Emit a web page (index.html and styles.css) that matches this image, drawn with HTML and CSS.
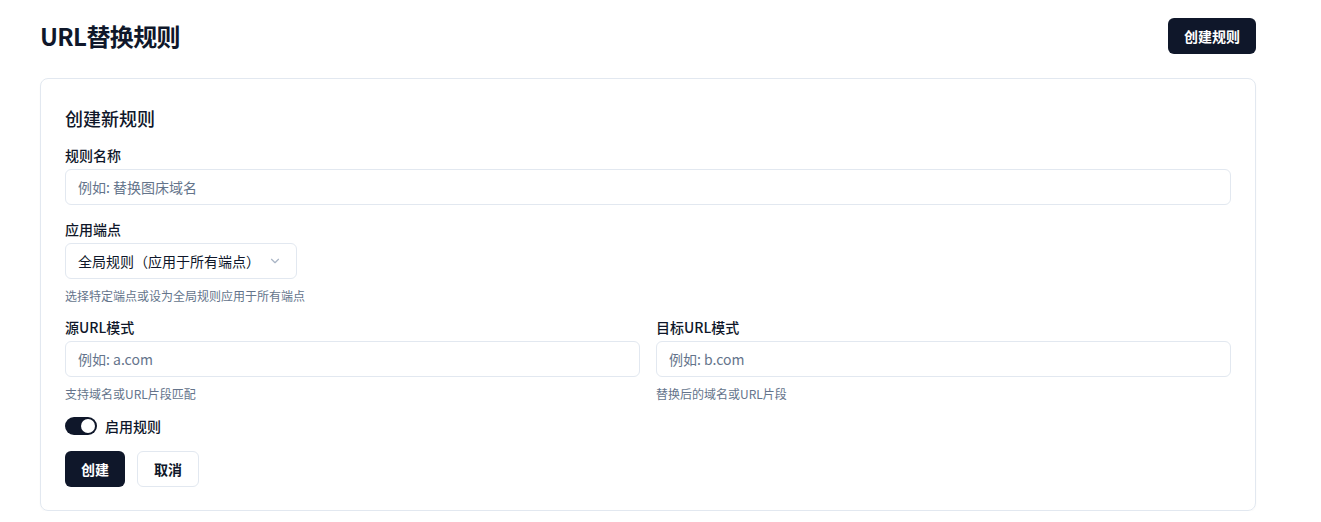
FILE: index.html
```
<!DOCTYPE html>
<html lang="zh-CN">

<head>
    <meta charset="utf-8">
    <title>URL替换规则</title>
    <link rel="stylesheet" href="styles.css">
</head>

<body>
    <div class="page">
        <div class="page-header">
            <h1>URL替换规则</h1>
            <button type="button" class="btn btn-primary">创建规则</button>
        </div>

        <div class="card">
            <h2 class="card-title">创建新规则</h2>

            <div class="field">
                <label for="rule-name">规则名称</label>
                <input type="text" id="rule-name" class="input" placeholder="例如: 替换图床域名">
            </div>

            <div class="field field-gap">
                <label>应用端点</label>
                <div class="select">
                    <span>全局规则（应用于所有端点）</span>
                    <svg class="chevron" width="16" height="16" viewBox="0 0 24 24" fill="none" stroke="currentColor" stroke-width="2" stroke-linecap="round" stroke-linejoin="round">
                        <path d="m6 9 6 6 6-6"></path>
                    </svg>
                </div>
                <p class="hint">选择特定端点或设为全局规则应用于所有端点</p>
            </div>

            <div class="row">
                <div class="field">
                    <label for="source">源URL模式</label>
                    <input type="text" id="source" class="input" placeholder="例如: a.com">
                    <p class="hint">支持域名或URL片段匹配</p>
                </div>
                <div class="field">
                    <label for="target">目标URL模式</label>
                    <input type="text" id="target" class="input" placeholder="例如: b.com">
                    <p class="hint">替换后的域名或URL片段</p>
                </div>
            </div>

            <div class="switch-row">
                <span class="switch"><span class="thumb"></span></span>
                <span class="switch-label">启用规则</span>
            </div>

            <div class="actions">
                <button type="button" class="btn btn-primary">创建</button>
                <button type="button" class="btn btn-outline">取消</button>
            </div>
        </div>
    </div>
</body>

</html>
```

FILE: styles.css
```
body {
    font-family: "Noto Sans CJK SC", "Noto Sans", sans-serif;
    background-color: #ffffff;
    color: #0f172a;
    margin: 0;
    padding: 0;
}

.page {
    width: 1216px;
    padding: 18px 0 0 40px;
}

.page-header {
    display: flex;
    justify-content: space-between;
    align-items: center;
    margin-bottom: 24px;
}

h1 {
    font-size: 24px;
    line-height: 36px;
    font-weight: 700;
    letter-spacing: -0.6px;
    margin: 0;
}

.btn {
    font-family: inherit;
    font-size: 14px;
    font-weight: 600;
    height: 36px;
    padding: 0 16px;
    border-radius: 6px;
    cursor: pointer;
}

.btn-primary {
    background-color: #0f172a;
    color: #ffffff;
    border: none;
}

.btn-outline {
    background-color: #ffffff;
    color: #0f172a;
    border: 1px solid #e2e8f0;
}

.card {
    border: 1px solid #e2e8f0;
    border-radius: 8px;
    padding: 24px 24px 23px;
    box-shadow: 0 1px 2px rgba(0, 0, 0, 0.03);
}

.card-title {
    font-size: 18px;
    line-height: 30px;
    font-weight: 500;
    margin: 0 0 12px;
}

.field {
    display: flex;
    flex-direction: column;
}

.field-gap {
    margin-top: 14px;
}

label {
    font-size: 14px;
    line-height: 20px;
    font-weight: 500;
    margin-bottom: 4px;
}

.input {
    font-family: inherit;
    font-size: 14px;
    height: 36px;
    box-sizing: border-box;
    padding: 0 12px;
    border: 1px solid #e2e8f0;
    border-radius: 6px;
    color: #0f172a;
    outline: none;
}

.input::placeholder {
    color: #64748b;
}

.select {
    width: 232px;
    height: 36px;
    box-sizing: border-box;
    display: flex;
    align-items: center;
    justify-content: space-between;
    padding: 0 14px 0 12px;
    border: 1px solid #e2e8f0;
    border-radius: 6px;
    font-size: 14px;
}

.chevron {
    color: #94a3b8;
    opacity: 0.8;
    width: 14px;
    height: 14px;
}

.hint {
    font-size: 12px;
    line-height: 16px;
    color: #64748b;
    margin: 9px 0 0;
}

.row {
    display: grid;
    grid-template-columns: 1fr 1fr;
    gap: 16px;
    margin-top: 13px;
}

.switch-row {
    display: flex;
    align-items: center;
    gap: 8px;
    height: 20px;
    margin-top: 14px;
}

.switch {
    width: 32px;
    height: 18px;
    box-sizing: border-box;
    padding: 2px;
    border-radius: 9px;
    background-color: #0f172a;
    display: flex;
    justify-content: flex-end;
}

.thumb {
    width: 14px;
    height: 14px;
    border-radius: 50%;
    background-color: #ffffff;
}

.switch-label {
    font-size: 14px;
    font-weight: 500;
}

.actions {
    display: flex;
    gap: 12px;
    margin-top: 15px;
}
```
